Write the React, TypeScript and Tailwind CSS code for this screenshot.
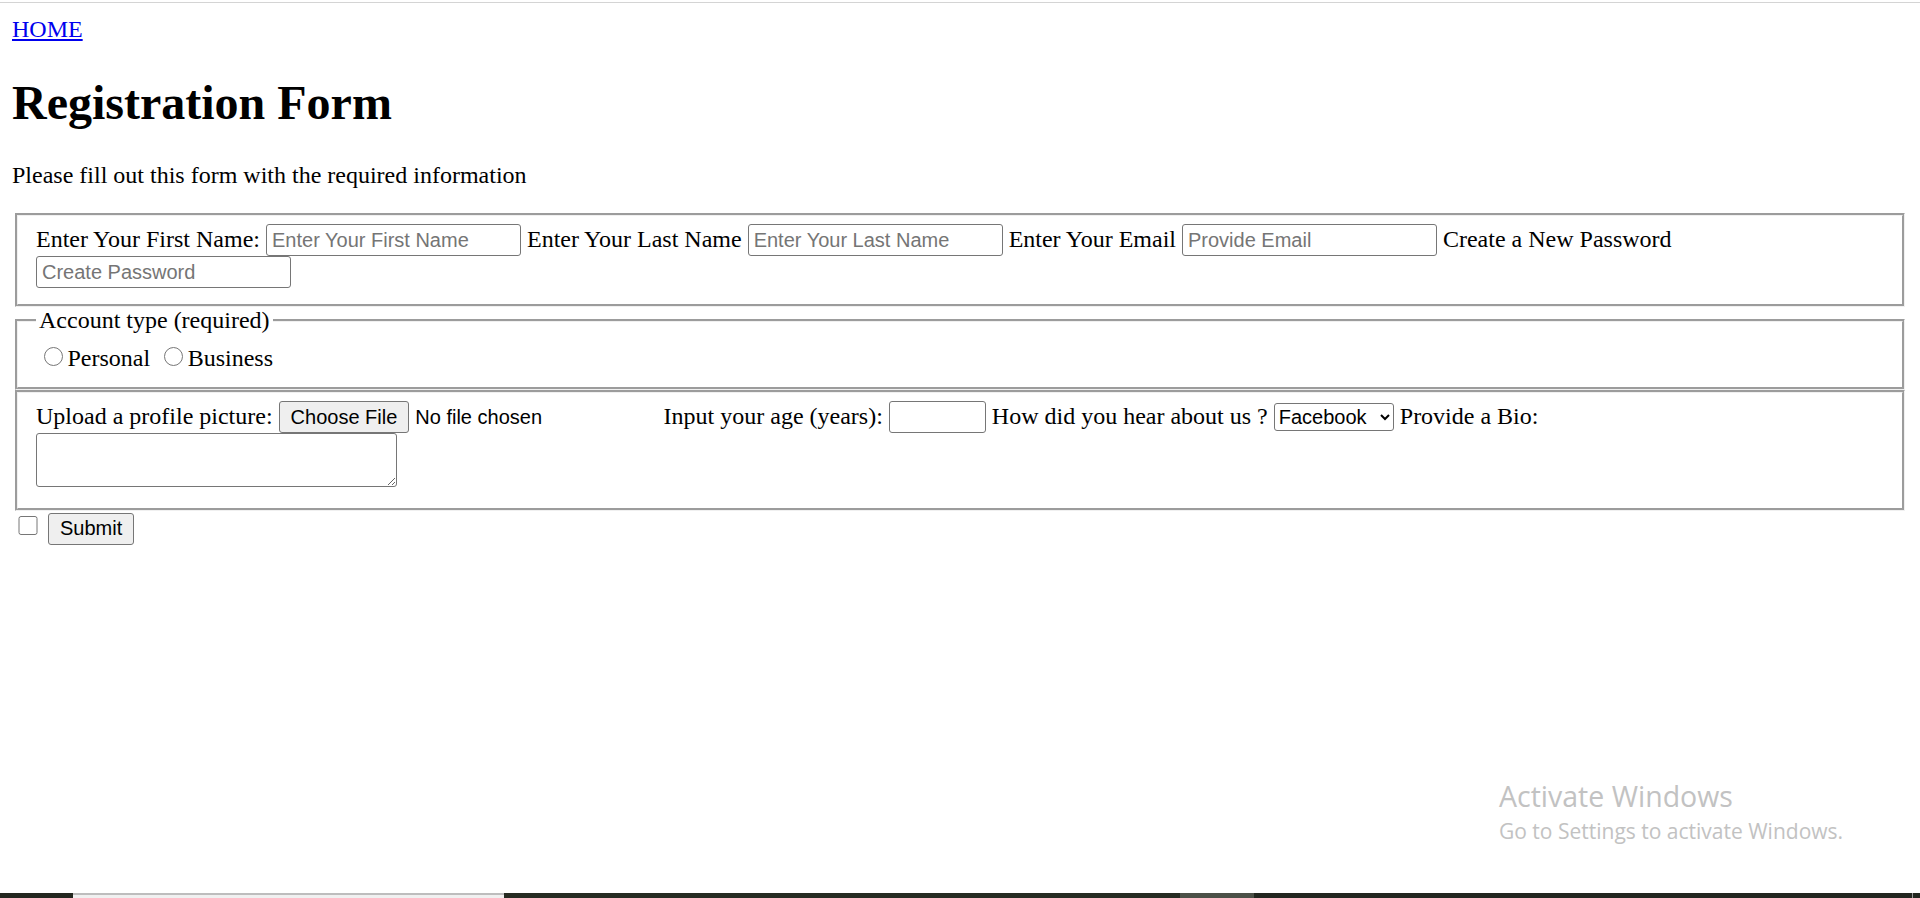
import React from "react";

const sans = "font-['Liberation_Sans',Arial,sans-serif] text-[20px] leading-[normal] text-black";

// text fields look like Chrome's default controls at 150% zoom
const field = `${sans} w-[255px] h-[32px] align-baseline rounded-[3px] border border-[#767676] bg-white px-[5px] placeholder:text-[#757575] outline-none`;

const btn = `${sans} h-[32px] align-baseline rounded-[3px] border border-[#767676] bg-[#efefef] px-[11px]`;

const fieldset = "mx-[3px] border-[3px] [border-style:groove] border-[#f0f0f0] px-[18px] pt-[8px]";

function Watermark() {
  return (
    <div className="pointer-events-none absolute left-[1499px] top-[779px] font-['Open_Sans','Noto_Sans',sans-serif] text-[#c2c2c2]">
      <div className="text-[28.5px] leading-[34px]">Activate Windows</div>
      <div className="mt-[4px] text-[21px] leading-[28px]">Go to Settings to activate Windows.</div>
    </div>
  );
}

function Taskbar() {
  return (
    <div className="flex h-[5px] shrink-0">
      <div className="w-[73px] bg-[#23271f]" />
      <div className="w-[431px] border-t-2 border-[#bdbdbd] bg-[#f0f0f0]" />
      <div className="w-[676px] bg-[#262b22]" />
      <div className="w-[74px] bg-[#4b5047]" />
      <div className="flex-1 bg-[#22261f]" />
      <div className="w-px bg-[#9a9a9a]" />
      <div className="w-[7px] bg-[#22261f]" />
    </div>
  );
}

export default function App() {
  return (
    <div className="relative flex h-[898px] flex-col overflow-hidden bg-white">
      {/* browser toolbar edge */}
      <div className="h-[3px] shrink-0 border-b border-[#d4d4d4]" />

      <div className="flex-1 px-[12px] pt-[13px] font-['Liberation_Serif','Times_New_Roman',serif] text-[24px] leading-[normal] text-black">
        <div>
          <a href="#" className="text-[#0000ee] underline">
            HOME
          </a>
        </div>

        <h1 className="my-[32px] text-[48px] font-bold">Registration Form</h1>

        <p className="mb-[24px]">Please fill out this form with the required information</p>

        <form onSubmit={(e) => e.preventDefault()}>
          <fieldset className={`${fieldset} pb-[16px]`}>
            <label>
              Enter Your First Name:{" "}
              <input type="text" placeholder="Enter Your First Name" className={field} />
            </label>{" "}
            <label>
              Enter Your Last Name{" "}
              <input type="text" placeholder="Enter Your Last Name" className={field} />
            </label>{" "}
            <label>
              Enter Your Email{" "}
              <input type="email" placeholder="Provide Email" className={field} />
            </label>{" "}
            <label>
              Create a New Password{" "}
              <input type="password" placeholder="Create Password" className={field} />
            </label>
          </fieldset>

          <fieldset className={`${fieldset} pb-[15px]`}>
            <legend className="px-[3px]">Account type (required)</legend>
            <label>
              <input
                type="radio"
                name="account"
                className="ml-[7.5px] mr-[4.5px] mt-[4.5px] h-[19.5px] w-[19.5px] align-baseline"
              />
              Personal
            </label>{" "}
            <label>
              <input
                type="radio"
                name="account"
                className="ml-[7.5px] mr-[4.5px] mt-[4.5px] h-[19.5px] w-[19.5px] align-baseline"
              />
              Business
            </label>
          </fieldset>

          <fieldset className={`${fieldset} pb-[15px]`}>
            <label>
              Upload a profile picture:{" "}
              <input
                type="file"
                className={`${sans} w-[379px] align-baseline file:mr-[6px] file:h-[32px] file:rounded-[3px] file:border file:border-solid file:border-[#767676] file:bg-[#efefef] file:px-[11px] file:text-black`}
              />
            </label>{" "}
            <label>
              Input your age (years):{" "}
              <input type="number" className={`${field} !w-[97px]`} />
            </label>{" "}
            <label>
              How did you hear about us ?{" "}
              <select
                defaultValue="facebook"
                className={`${sans} h-[28px] w-[120px] align-baseline rounded-[3px] border border-[#767676] bg-white`}
              >
                <option value="facebook">Facebook</option>
                <option value="instagram">Instagram</option>
                <option value="friend">A friend</option>
              </select>
            </label>{" "}
            <label>
              Provide a Bio:{" "}
              <textarea className="h-[54px] w-[361px] resize align-baseline rounded-[3px] border border-[#767676] bg-white font-['Liberation_Mono',monospace] text-[20px]" />
            </label>
          </fieldset>

          <input type="checkbox" className="mx-[4.5px] ml-[6px] my-[4.5px] h-[19.5px] w-[19.5px] align-baseline" />{" "}
          <button type="submit" className={btn}>
            Submit
          </button>
        </form>
      </div>

      <Taskbar />
      <Watermark />
    </div>
  );
}
